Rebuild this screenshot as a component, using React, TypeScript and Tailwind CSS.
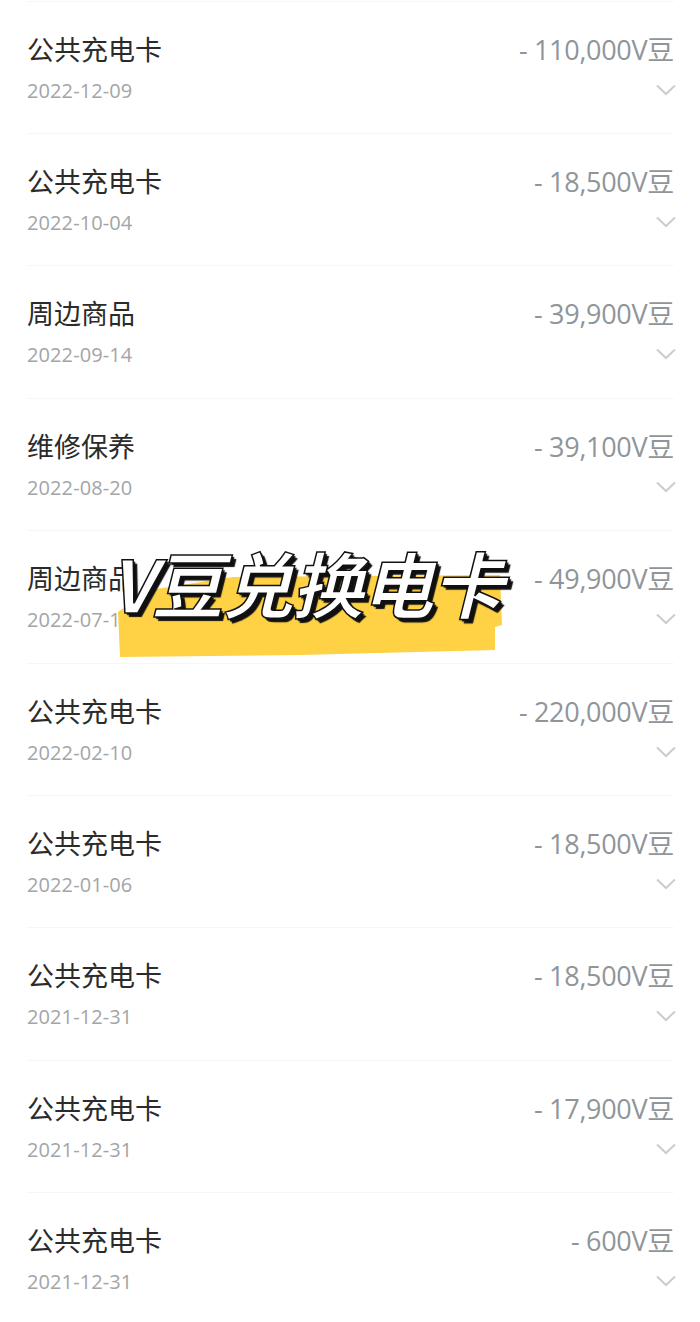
import React from 'react';

const rows = [
  { title: '公共充电卡', date: '2022-12-09', amount: '- 110,000V豆' },
  { title: '公共充电卡', date: '2022-10-04', amount: '- 18,500V豆' },
  { title: '周边商品', date: '2022-09-14', amount: '- 39,900V豆' },
  { title: '维修保养', date: '2022-08-20', amount: '- 39,100V豆' },
  { title: '周边商品', date: '2022-07-19', amount: '- 49,900V豆' },
  { title: '公共充电卡', date: '2022-02-10', amount: '- 220,000V豆' },
  { title: '公共充电卡', date: '2022-01-06', amount: '- 18,500V豆' },
  { title: '公共充电卡', date: '2021-12-31', amount: '- 18,500V豆' },
  { title: '公共充电卡', date: '2021-12-31', amount: '- 17,900V豆' },
  { title: '公共充电卡', date: '2021-12-31', amount: '- 600V豆' },
];

function Chevron() {
  return (
    <svg width="20" height="12" viewBox="0 0 20 12" fill="none" className="text-[#c9cdd0]">
      <path d="M1 1.5 L10 10 L19 1.5" stroke="currentColor" strokeWidth="2" />
    </svg>
  );
}

export default function App() {
  return (
    <div className="relative w-[700px] h-[1322px] overflow-hidden bg-white pt-[0.6px] font-['Open_Sans','Noto_Sans_CJK_SC',sans-serif]">
      {rows.map((row, i) => (
        <div key={i} className="ml-[27px] mr-[26px] h-[132.4px] border-t border-[#f7f7f7] pt-[30px] flex justify-between">
          <div>
            <div className="text-[27px] leading-9 text-[#2b2b2b]">{row.title}</div>
            <div className="mt-[10px] text-[20px] leading-[26px] tracking-[0.1px] text-[#a3a5a6]">{row.date}</div>
          </div>
          <div className="flex flex-col items-end">
            <div className="text-[27px] leading-9 tracking-[-0.3px] text-[#8f9599]">{row.amount}</div>
            <div className="mt-[16px] -mr-[2px]">
              <Chevron />
            </div>
          </div>
        </div>
      ))}

      {/* Title sticker */}
      <div className="absolute left-[116px] top-[535px] w-[400px] h-[126px]">
        <svg className="absolute inset-0" width="400" height="126" viewBox="0 0 400 126">
          <path d="M2 77 L34 55 L117 42 L384 40 L386 90 L379 92 L379 115 L184 120 L4 122 Z" fill="#ffd145" />
        </svg>
        <div className="absolute -left-[7px] -top-[2px] whitespace-nowrap text-[72px] leading-[98px] font-bold italic text-white font-['Noto_Sans_CJK_SC',sans-serif] tracking-[-2px] [-webkit-text-stroke:1.5px_#111] [text-shadow:2px_2px_1px_#111,4px_4px_1px_#111]">
          V豆兑换电卡
        </div>
      </div>
    </div>
  );
}
